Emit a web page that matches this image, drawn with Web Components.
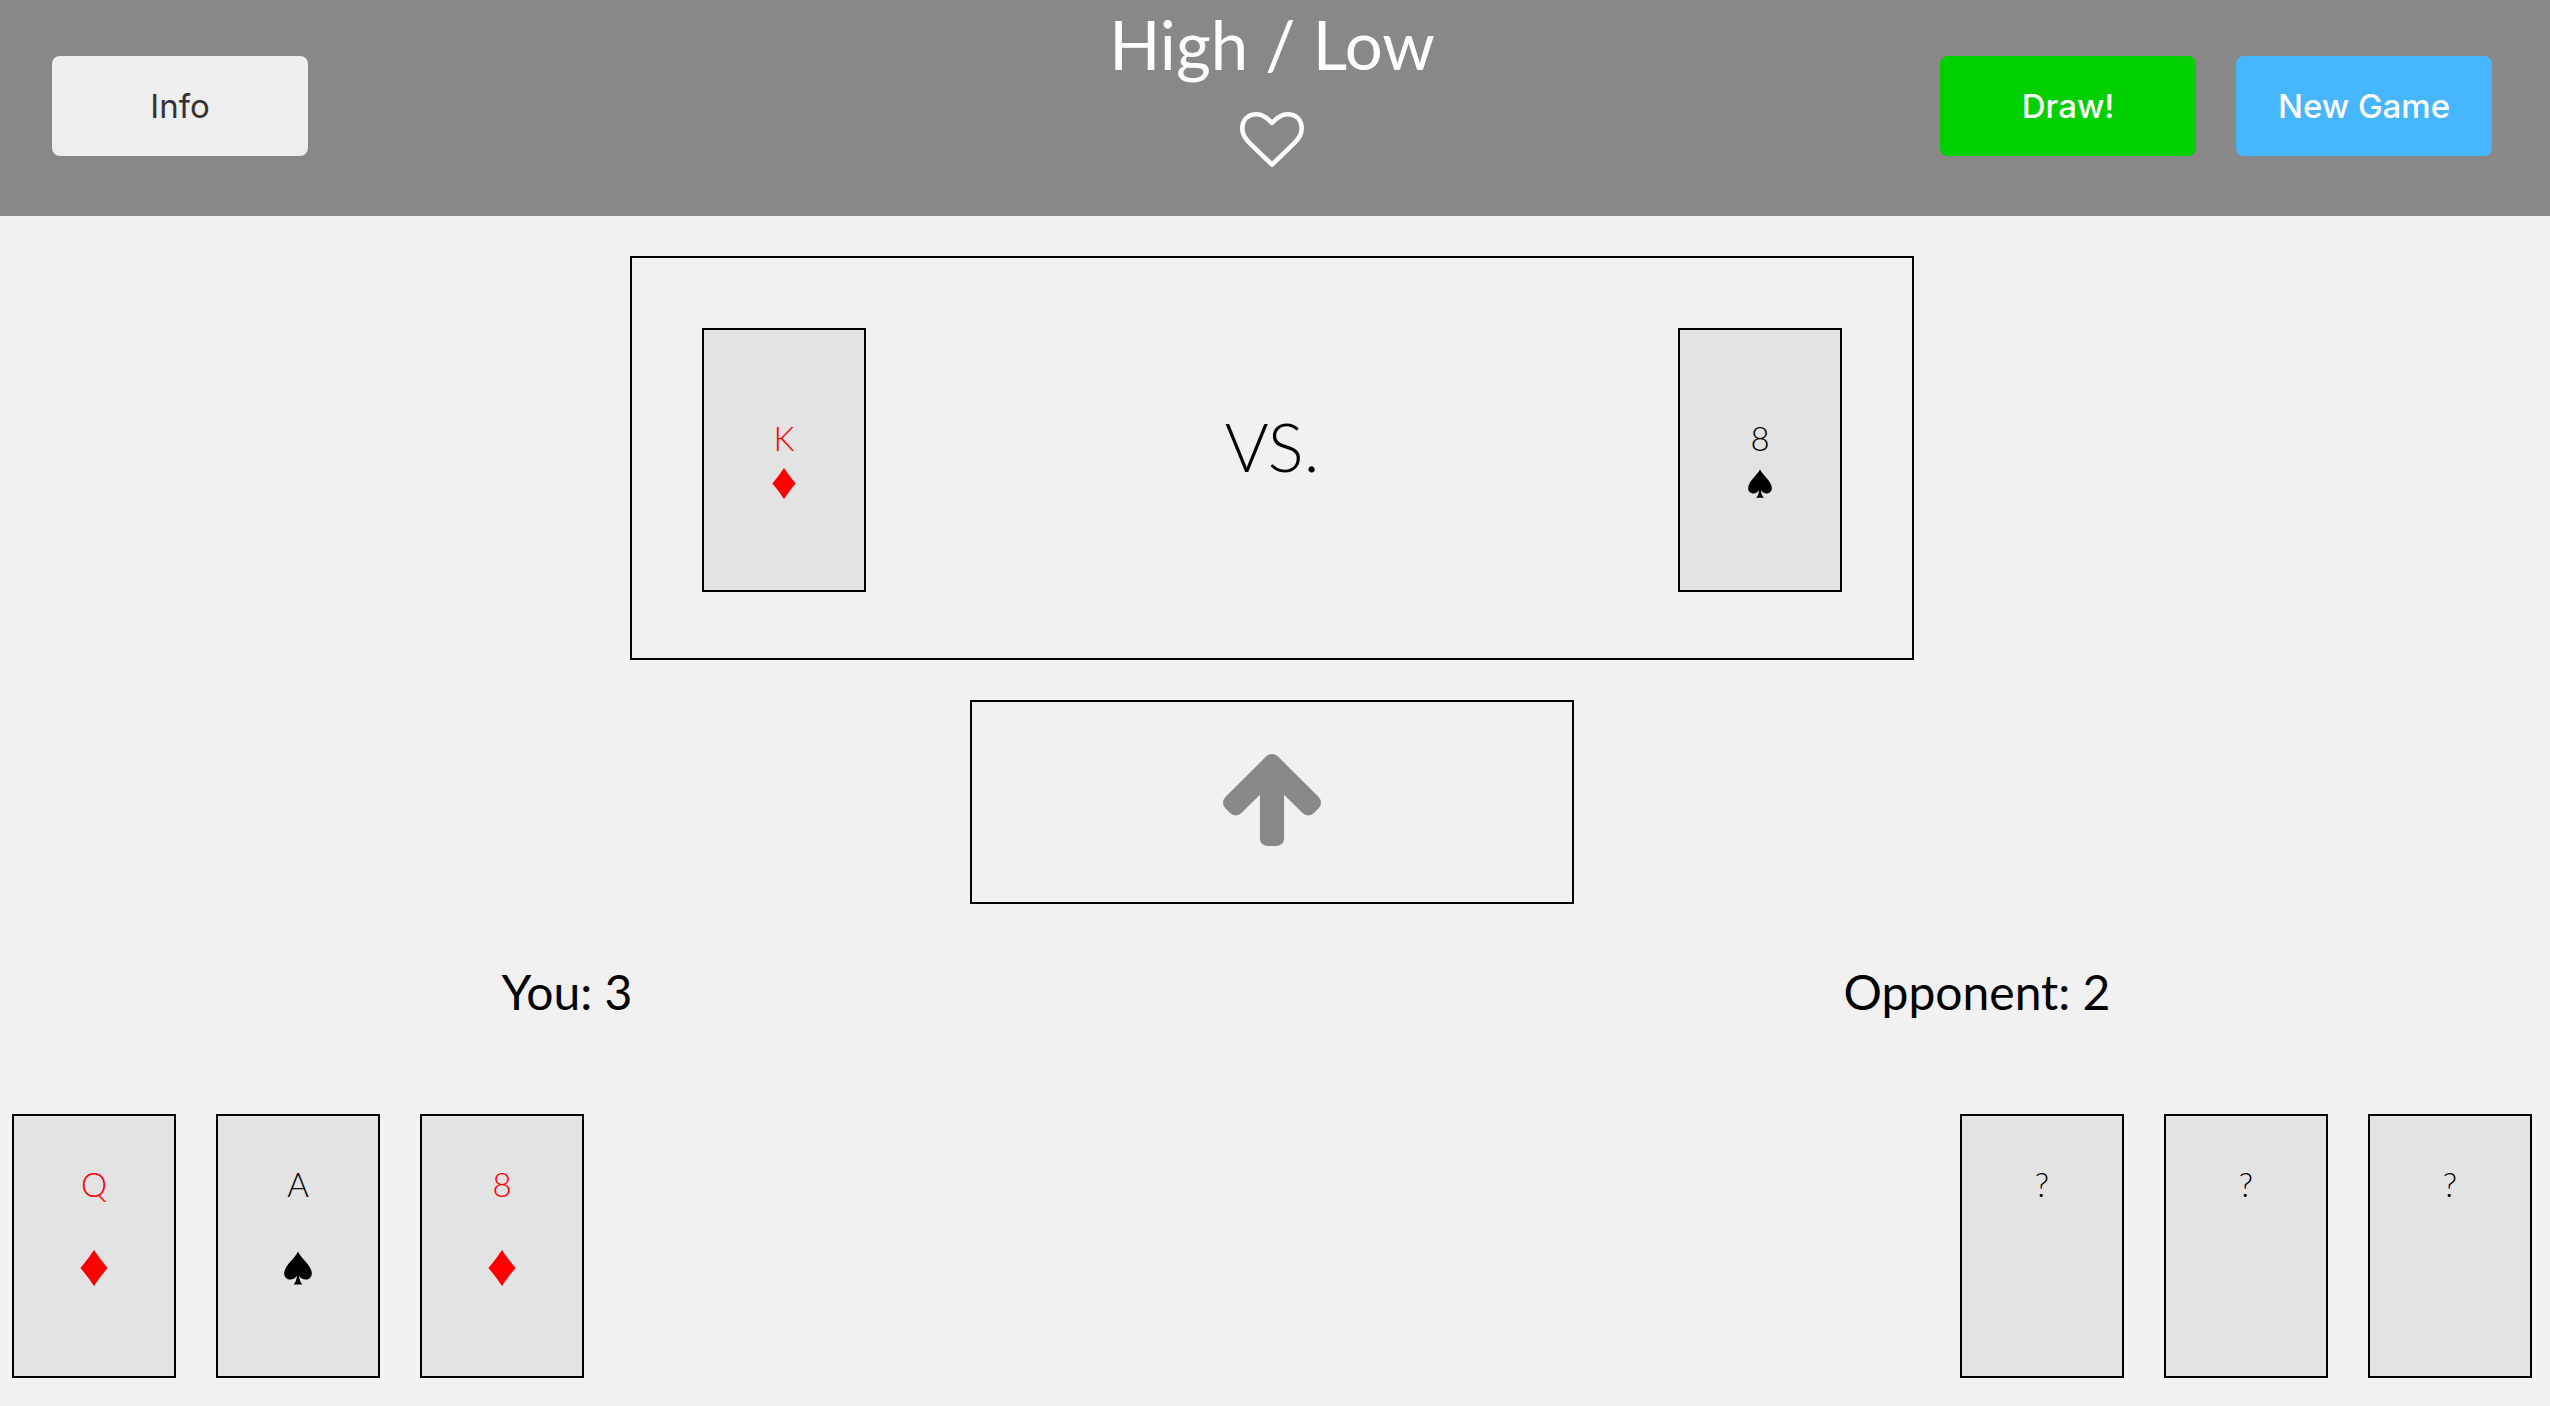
<!DOCTYPE html>
<html lang="en">
<head>
<meta charset="utf-8">
<meta name="viewport" content="width=device-width, initial-scale=1">
<title>High / Low</title>
<style>
  body { margin: 0; background: #f1f1f1; color: #000; font-family: Lato, sans-serif; }
</style>
</head>
<body>
<high-low-game></high-low-game>

<script>
const define = (name, html, setup) => {
  const template = document.createElement('template');
  template.innerHTML = html;
  customElements.define(name, class extends HTMLElement {
    constructor() {
      super();
      this.attachShadow({ mode: 'open' }).append(template.content.cloneNode(true));
    }
    connectedCallback() { if (setup) setup(this, this.shadowRoot); }
  });
};

define('game-button', `
  <style>
    :host { display: block; }
    button {
      width: 256px; height: 100px; padding: 0; border: 0; border-radius: 8px;
      background: #eee; color: #333; font: 400 33px/40px Inter, sans-serif; cursor: pointer;
    }
    :host([kind="draw"]) button { background: #00d000; color: #fff; font-weight: 500; }
    :host([kind="new"]) button { background: #46b6ff; color: #fff; font-weight: 500; }
  </style>
  <button type="button"><slot></slot></button>`);

define('heart-icon', `
  <style>:host { display: block; } svg { display: block; width: 64px; height: 55px; fill: currentColor; }</style>
  <svg viewBox="0 128 1792 1536" preserveAspectRatio="none" aria-hidden="true"><path d="M1664 596q0-81-21.5-143t-55-98.5-81.5-59.5-94-31-98-8-112 25.5-110.5 64-86.5 72-60 61.5q-18 22-49 22t-49-22q-24-28-60-61.5t-86.5-72-110.5-64-112-25.5-98 8-94 31-81.5 59.5-55 98.5-21.5 143q0 168 187 355l581 560 580-559q188-188 188-356zm128 0q0 221-229 450l-623 600q-18 18-44 18t-44-18l-624-602q-10-8-27.5-26t-55.5-65.5-68-97.5-53.5-121-23.5-138q0-220 127-344t351-124q62 0 126.5 21.5t120 58 95.5 68.5 76 68q36-36 76-68t95.5-68.5 120-58 126.5-21.5q224 0 351 124t127 344z"/></svg>`);

define('arrow-icon', `
  <style>:host { display: block; } svg { display: block; width: 98px; height: 92px; fill: #888; }</style>
  <svg viewBox="117 192 1558 1472" preserveAspectRatio="none" aria-hidden="true"><path d="M1675 971q0 51-37 90l-75 75q-38 38-91 38-54 0-90-38l-294-293v704q0 52-37.5 84.5t-90.5 32.5h-128q-53 0-90.5-32.5t-37.5-84.5v-704l-294 293q-36 38-90 38t-90-38l-75-75q-38-38-38-90 0-53 38-91l651-651q35-37 90-37 54 0 91 37l651 651q37 39 37 91z"/></svg>`);

define('suit-icon', `
  <style>
    :host { display: block; }
    svg { display: block; width: 28px; height: 36px; fill: currentColor; }
    :host([size="small"]) svg { width: 24px; height: 31px; }
    path { display: none; }
    :host([suit="diamond"]) .diamond, :host([suit="spade"]) .spade { display: inline; }
  </style>
  <svg viewBox="0 0 28 36" aria-hidden="true">
    <path class="diamond" d="M14 0Q20 9.300 27.600 18Q20 26.700 14 36Q8 26.700 .4 18Q8 9.300 14 0Z"/>
    <path class="spade" d="M14 1.500C16.500 8 27.800 15.500 27.800 23.500C27.800 27.300 25 29.600 21.800 29.600C18.800 29.600 16.300 28.400 15.200 25.600C15.200 29.500 16.200 32.300 18.500 34.500H9.500C11.800 32.300 12.800 29.500 12.800 25.600C11.700 28.400 9.200 29.600 6.200 29.600C3 29.600 .2 27.300 .2 23.500C.2 15.500 11.500 8 14 1.500Z"/>
  </svg>`);

define('playing-card', `
  <style>
    :host {
      box-sizing: border-box; width: 164px; height: 264px; flex: none;
      display: flex; flex-direction: column; align-items: center; gap: 46px; padding-top: 48px;
      border: 2px solid #000; background: #e3e3e3;
      font-size: 33px; line-height: 40px; font-weight: 300;
    }
    :host([played]) { gap: 10px; padding-top: 88px; }
    :host([suit="diamond"]) { color: #f00; }
  </style>
  <slot></slot>
  <suit-icon></suit-icon>`, (host, root) => {
  const icon = root.querySelector('suit-icon');
  if (!host.hasAttribute('suit')) { icon.remove(); return; }
  icon.setAttribute('suit', host.getAttribute('suit'));
  if (host.hasAttribute('played')) icon.setAttribute('size', 'small');
});

define('game-header', `
  <style>
    :host {
      box-sizing: border-box; min-height: 216px; padding: 0 58px 0 52px;
      display: grid; grid-template-columns: 1fr auto 1fr; align-items: start;
      background: #888; color: #fff;
    }
    .left, .right { display: flex; gap: 40px; padding-top: 56px; }
    .right { justify-content: flex-end; }
    .title { display: flex; flex-direction: column; align-items: center; gap: 24px; }
    h1 { margin: 0; font-size: 67px; line-height: 88px; font-weight: 400; }
  </style>
  <div class="left"><slot name="left"></slot></div>
  <div class="title"><h1><slot></slot></h1><heart-icon></heart-icon></div>
  <div class="right"><slot name="right"></slot></div>`);

define('battle-zone', `
  <style>
    :host {
      box-sizing: border-box; width: 1284px; max-width: 100%; padding: 70px 70px 66px;
      display: flex; justify-content: space-between; border: 2px solid #000;
    }
    p { margin: 0; padding-top: 74px; font-size: 67px; line-height: 88px; font-weight: 300; }
  </style>
  <slot name="mine"></slot><p>VS.</p><slot name="theirs"></slot>`);

define('drop-zone', `
  <style>
    :host {
      box-sizing: border-box; width: 604px; height: 204px;
      display: flex; justify-content: center; align-items: flex-start; padding-top: 52px;
      border: 2px solid #000;
    }
  </style>
  <arrow-icon></arrow-icon>`);

define('score-board', `
  <style>
    :host { display: grid; grid-template-columns: 1fr 1fr; column-gap: 300px; padding: 58px 0 92px; }
    ::slotted(h2) { margin: 0; text-align: center; font-size: 48px; line-height: 60px; font-weight: 400; }
  </style>
  <slot></slot>`);

define('card-hand', `
  <style>:host { display: flex; gap: 40px; }</style>
  <slot></slot>`);

define('high-low-game', `
  <style>
    :host { display: block; }
    main { padding: 40px 18px 28px 12px; }
    .table { display: flex; flex-direction: column; align-items: center; gap: 40px; }
    .hands { display: flex; justify-content: space-between; }
  </style>
  <game-header>
    <game-button slot="left">Info</game-button>
    High / Low
    <game-button slot="right" kind="draw">Draw!</game-button>
    <game-button slot="right" kind="new">New Game</game-button>
  </game-header>
  <main>
    <div class="table">
      <battle-zone>
        <playing-card slot="mine" played suit="diamond">K</playing-card>
        <playing-card slot="theirs" played suit="spade">8</playing-card>
      </battle-zone>
      <drop-zone></drop-zone>
    </div>
    <score-board><h2>You: 3</h2><h2>Opponent: 2</h2></score-board>
    <div class="hands">
      <card-hand>
        <playing-card suit="diamond">Q</playing-card>
        <playing-card suit="spade">A</playing-card>
        <playing-card suit="diamond">8</playing-card>
      </card-hand>
      <card-hand>
        <playing-card>?</playing-card>
        <playing-card>?</playing-card>
        <playing-card>?</playing-card>
      </card-hand>
    </div>
  </main>`);
</script>
</body>
</html>
